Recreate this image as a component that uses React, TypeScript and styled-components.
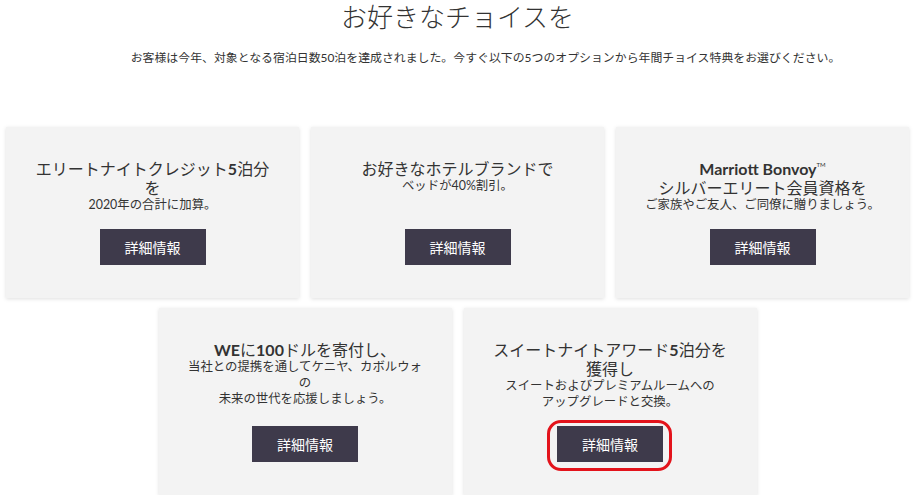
import React from "react";
import styled, { createGlobalStyle } from "styled-components";

const GlobalStyle = createGlobalStyle`
  html, body {
    margin: 0;
    padding: 0;
    background: #ffffff;
  }
  body {
    font-family: Lato, "Noto Sans CJK JP", sans-serif;
    color: #333333;
  }
`;

const Page = styled.div`
  display: flex;
  flex-direction: column;
  align-items: center;
  width: 915px;
`;

const Heading = styled.h1`
  margin: 1px 0 0;
  font-family: "Noto Sans CJK JP", sans-serif;
  font-size: 26px;
  line-height: 30px;
  font-weight: 300;
  color: #333333;
`;

const Intro = styled.p`
  margin: 19px 0 0 56px;
  font-family: Lato, "Noto Sans CJK JP", sans-serif;
  font-size: 11.9px;
  line-height: 16px;
  color: #333333;
`;

const Cards = styled.div`
  margin-top: 61px;
  width: 903px;
  display: flex;
  flex-wrap: wrap;
  justify-content: center;
  column-gap: 12px;
  row-gap: 10px;
`;

const Card = styled.div`
  width: 293px;
  box-sizing: border-box;
  background: #f3f3f3;
  box-shadow: 0 1px 4px rgba(0, 0, 0, 0.13);
  padding: 32px 16px 33px;
  display: flex;
  flex-direction: column;
  align-items: center;
  text-align: center;
`;

const Title = styled.div`
  font-family: Lato, "Noto Sans CJK JP", sans-serif;
  font-size: 16px;
  line-height: 19px;
  color: #333333;
  white-space: nowrap;
`;

const Latin = styled.span`
  font-weight: 700;
`;

const Tm = styled.sup`
  font-size: 6px;
  vertical-align: 8px;
  line-height: 0;
`;

const Sub = styled.div`
  font-family: Lato, "Noto Sans CJK JP", sans-serif;
  font-size: 12.4px;
  line-height: 16px;
  color: #333333;
  white-space: nowrap;
`;

const Actions = styled.div`
  margin-top: auto;
  padding-top: 16px;
`;

const ButtonWrap = styled.span`
  position: relative;
  display: inline-block;
`;

const Button = styled.button`
  display: block;
  width: 106px;
  height: 36px;
  border: none;
  background: #3e3a4b;
  color: #ffffff;
  font-family: "Noto Sans CJK JP", sans-serif;
  font-size: 14px;
  cursor: pointer;
  padding: 0;
`;

const Ring = styled.span`
  position: absolute;
  top: -6px;
  left: -10px;
  right: -9px;
  bottom: -9px;
  border: 3px solid #e3131b;
  border-radius: 14px;
  pointer-events: none;
`;

type Option = {
  title: React.ReactNode[];
  sub: React.ReactNode[];
  highlighted?: boolean;
};

const options: Option[] = [
  {
    title: [
      <>
        エリートナイトクレジット<Latin>5</Latin>泊分
      </>,
      "を",
    ],
    sub: ["2020年の合計に加算。"],
  },
  {
    title: ["お好きなホテルブランドで"],
    sub: ["ベッドが40%割引。"],
  },
  {
    title: [
      <>
        <Latin>Marriott Bonvoy</Latin>
        <Tm>TM</Tm>
      </>,
      "シルバーエリート会員資格を",
    ],
    sub: ["ご家族やご友人、ご同僚に贈りましょう。"],
  },
  {
    title: [
      <>
        <Latin>WE</Latin>に<Latin>100</Latin>ドルを寄付し、
      </>,
    ],
    sub: ["当社との提携を通してケニヤ、カボルウォ", "の", "未来の世代を応援しましょう。"],
  },
  {
    title: [
      <>
        スイートナイトアワード<Latin>5</Latin>泊分を
      </>,
      "獲得し",
    ],
    sub: ["スイートおよびプレミアムルームへの", "アップグレードと交換。"],
    highlighted: true,
  },
];

export default function App() {
  return (
    <>
      <GlobalStyle />
      <Page>
        <Heading>お好きなチョイスを</Heading>
        <Intro>
          お客様は今年、対象となる宿泊日数50泊を達成されました。今すぐ以下の5つのオプションから年間チョイス特典をお選びください。
        </Intro>
        <Cards>
          {options.map((o, i) => (
            <Card key={i}>
              {o.title.map((t, j) => (
                <Title key={j}>{t}</Title>
              ))}
              {o.sub.map((s, j) => (
                <Sub key={j}>{s}</Sub>
              ))}
              <Actions>
                <ButtonWrap>
                  <Button>詳細情報</Button>
                  {o.highlighted && <Ring />}
                </ButtonWrap>
              </Actions>
            </Card>
          ))}
        </Cards>
      </Page>
    </>
  );
}
